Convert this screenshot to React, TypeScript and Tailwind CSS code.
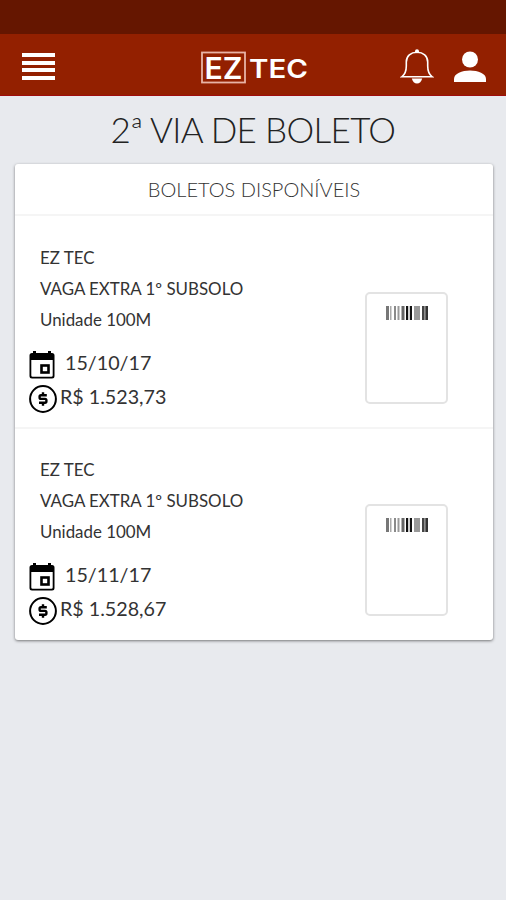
import { clsx } from "clsx";

const boletos = [
    { company: "EZ TEC", name: "VAGA EXTRA 1º SUBSOLO", unit: "Unidade 100M", dueDate: "15/10/17", amount: "R$ 1.523,73" },
    { company: "EZ TEC", name: "VAGA EXTRA 1º SUBSOLO", unit: "Unidade 100M", dueDate: "15/11/17", amount: "R$ 1.528,67" },
];

// [x, width, color]
const bars: [number, number, string][] = [
    [0, 3, "#777"],
    [4, 1.5, "#aaa"],
    [8, 2, "#8a8a8a"],
    [11.5, 2, "#999"],
    [15.5, 3, "#666"],
    [20, 2.2, "#111"],
    [23.8, 2.2, "#111"],
    [28, 6, "#999"],
    [36, 2.6, "#444"],
    [39.3, 2.7, "#333"],
];

function Logo() {
    return (
        <svg width="110" height="36" viewBox="0 0 110 36" fill="#fff" aria-label="EZ TEC" className="ml-[145px]">
            <rect x="2" y="3.5" width="43" height="30" fill="none" stroke="#e8b3a6" strokeWidth="1.8" />
            <g fontFamily="Inter, sans-serif" fontWeight="600">
                <text x="4.5" y="29.5" fontSize="30" textLength="38" lengthAdjust="spacingAndGlyphs">EZ</text>
                <text x="49" y="28.5" fontSize="26" textLength="59" lengthAdjust="spacingAndGlyphs">TEC</text>
            </g>
        </svg>
    );
}

function BellIcon() {
    return (
        <svg width="34" height="36" viewBox="0 0 34 36" fill="none" stroke="#fff" strokeWidth="1.6">
            <path d="M1.8 27.8C5 25.5 6.3 22.5 6.3 17V13C6.3 7 10.8 3.3 17 3.3S27.7 7 27.7 13V17C27.7 22.5 29 25.5 32.2 27.8Z" />
            <path d="M11.8 29.5H22.2C21.5 32.5 19.5 34.5 17 34.5S12.5 32.5 11.8 29.5Z" fill="#fff" stroke="none" />
            <circle cx="17" cy="2.3" r="2" fill="#fff" stroke="none" />
        </svg>
    );
}

function UserIcon() {
    return (
        <svg width="32" height="32" viewBox="0 0 32 32" fill="#fff">
            <circle cx="16" cy="8.5" r="8" />
            <path d="M0 31V28C0 22.5 8 19.5 16 19.5S32 22.5 32 28V31Z" />
        </svg>
    );
}

function CalendarIcon() {
    return (
        <svg width="26" height="28" viewBox="0 0 26 28">
            <path fillRule="evenodd" d="M3 2H23Q25.5 2 25.5 4.5V25Q25.5 27.5 23 27.5H3Q.5 27.5 .5 25V4.5Q.5 2 3 2ZM2.3 9V24.5Q2.3 25.8 3.6 25.8H22.4Q23.7 25.8 23.7 24.5V9Z" />
            <path d="M4 0H7V4H4ZM19 0H22V4H19Z" />
            <rect x="12.5" y="14.5" width="7" height="7" fill="none" stroke="#000" strokeWidth="2.6" />
        </svg>
    );
}

function DollarIcon() {
    return (
        <svg width="28" height="28" viewBox="0 0 28 28" fill="none" stroke="#000">
            <circle cx="14" cy="14" r="12.9" strokeWidth="2" />
            <path d="M17.8 10.2H12Q10.6 10.2 10.6 11.6V12.5Q10.6 13.9 12 13.9H16Q17.4 13.9 17.4 15.3V16.3Q17.4 17.7 16 17.7H10M14 7.2V10M14 18V20.8" strokeWidth="2.4" />
        </svg>
    );
}

function Barcode() {
    return (
        <svg width="42" height="14" viewBox="0 0 42 14">
            {bars.map(([x, width, color]) => (
                <rect key={x} x={x} y="0" width={width} height="14" fill={color} />
            ))}
        </svg>
    );
}

export default function App() {
    return (
        <div className="h-[900px] w-full overflow-hidden bg-[#e8eaee] font-['Lato',sans-serif] text-[#333]">
            <div className="h-[34px] bg-[#651600]" />
            <header className="flex h-[62px] items-center border-b border-[#a00c0c] bg-[#932000] pl-[22px] pt-1">
                <button className="flex w-[33px] flex-col gap-[3.5px]" aria-label="Menu">
                    {[0, 1, 2, 3].map((line) => (
                        <span key={line} className="h-1 w-full bg-white" />
                    ))}
                </button>
                <Logo />
                <div className="ml-[90px] flex items-center gap-[20px]">
                    <BellIcon />
                    <UserIcon />
                </div>
            </header>

            <h1 className="flex h-[68px] items-center justify-center pb-[2px] text-[35px] font-light tracking-[-0.67px] text-[#222] whitespace-nowrap">
                2ª VIA DE BOLETO
            </h1>

            <main className="ml-[15px] h-[476px] w-[478px] rounded-[3px] bg-white shadow-[0_1px_3px_rgba(0,0,0,0.5)]">
                <h2 className="flex h-[52px] items-center justify-center border-b-2 border-[#f5f5f5] text-[20px] font-light text-[#333]">
                    BOLETOS DISPONÍVEIS
                </h2>
                {boletos.map((boleto, index) => (
                    <section
                        key={boleto.dueDate}
                        className={clsx("flex justify-between pr-[45px]", index > 0 ? "h-[213px] border-t-2 border-[#f5f5f5]" : "h-[211px]")}
                    >
                        <div className={clsx("pl-[14px]", index > 0 ? "pt-[25px]" : "pt-[26px]")}>
                            <div className="pl-[11px] text-[16.9px] leading-[31px]">
                                <p>{boleto.company}</p>
                                <p>{boleto.name}</p>
                                <p>{boleto.unit}</p>
                            </div>
                            <div className="mt-[13px] flex h-[34px] items-center gap-[10px] text-[19.7px]">
                                <CalendarIcon />
                                <span className="pb-1">{boleto.dueDate}</span>
                            </div>
                            <div className="flex h-[34px] items-center gap-[3px] text-[19.7px]">
                                <DollarIcon />
                                <span className="pb-1">{boleto.amount}</span>
                            </div>
                        </div>
                        <div
                            className={clsx(
                                "flex h-[112px] w-[83px] justify-center rounded-[5px] border-2 border-[#e3e3e3] pt-3",
                                index > 0 ? "mt-[75px]" : "mt-[76px]"
                            )}
                        >
                            <Barcode />
                        </div>
                    </section>
                ))}
            </main>
        </div>
    );
}
